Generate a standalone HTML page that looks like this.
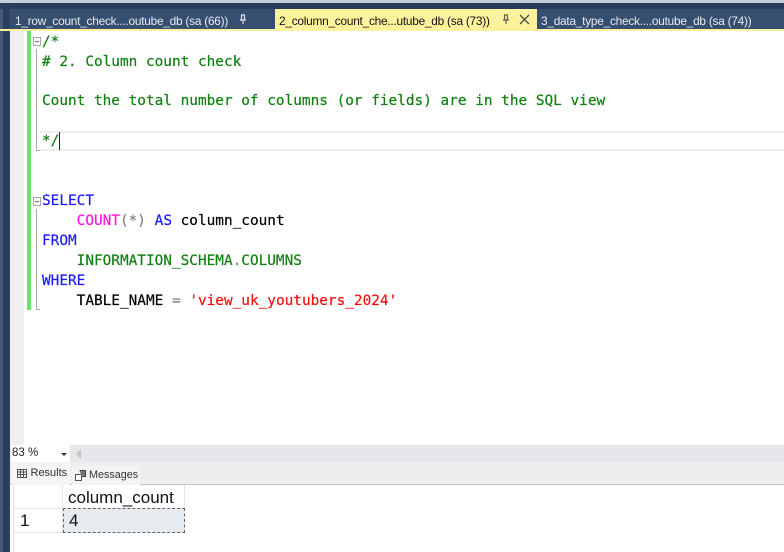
<!DOCTYPE html>
<html>
<head>
<meta charset="utf-8">
<style>
html,body{margin:0;padding:0}
body{width:784px;height:552px;position:relative;overflow:hidden;background:#fff;font-family:"Liberation Sans",sans-serif}
div{position:absolute;box-sizing:border-box}
.tab{font-size:11.85px;line-height:16px;white-space:pre;top:13px;letter-spacing:-.02em}
.l{position:absolute;left:42px;font:14.4px/20px "DejaVu Sans Mono",monospace;white-space:pre;color:#000;-webkit-text-stroke:.2px}
.g{color:#118011}.b{color:#1a1aff}.m{color:#ff14e0}.h{color:#808080}.r{color:#f01010}.t{color:#118011}
</style>
</head>
<body>
<!-- window chrome -->
<div style="left:0;top:0;width:784px;height:3px;background:#c6cede"></div>
<div style="left:0;top:3px;width:784px;height:6px;background:#2a3a5a"></div>
<div style="left:0;top:9px;width:784px;height:22px;background:#364e70"></div>
<div style="left:0;top:3px;width:10px;height:549px;background:#2b3c5c"></div>
<div style="left:0;top:9px;width:3px;height:543px;background:#44597c"></div>
<div style="left:9px;top:9px;width:1px;height:543px;background:#324665"></div>
<!-- tabs -->
<div style="left:275px;top:9px;width:262px;height:22px;background:#fff29d"></div>
<div style="left:0;top:29px;width:784px;height:2px;background:#fff29d"></div>
<div class="tab" style="left:15px;color:#e8ecf2">1_row_count_check....outube_db (sa (66))</div>
<div class="tab" style="left:279px;color:#111">2_column_count_che...utube_db (sa (73))</div>
<div class="tab" style="left:541px;color:#e8ecf2">3_data_type_check....outube_db (sa (74))</div>
<svg style="position:absolute;left:238px;top:14px" width="10" height="11" viewBox="0 0 10 11"><path d="M3 1h4M3.5 1v4.5M6.5 1v4.5M2 6h6M5 6v4" stroke="#dfe5ee" stroke-width="1.2" fill="none"/></svg>
<svg style="position:absolute;left:501px;top:14px" width="10" height="11" viewBox="0 0 10 11"><path d="M3 1h4M3.5 1v4.5M6.5 1v4.5M2 6h6M5 6v4" stroke="#5a5a4a" stroke-width="1.2" fill="none"/></svg>
<svg style="position:absolute;left:519px;top:14px" width="11" height="11" viewBox="0 0 11 11"><path d="M1 1l9 9M10 1l-9 9" stroke="#4a4a40" stroke-width="1.3" fill="none"/></svg>
<!-- editor -->
<div style="left:10px;top:31px;width:774px;height:414px;background:#fff"></div>
<div style="left:10px;top:31px;width:14px;height:414px;background:#efeff2"></div>
<div style="left:27px;top:31px;width:4px;height:279px;background:#6fe06f"></div>
<div style="left:40px;top:131px;width:744px;height:20px;background:#fff;border-top:2px solid #eeeeee;border-bottom:2px solid #eeeeee"></div>
<!-- outlining -->
<div style="left:36px;top:49px;width:1px;height:101px;background:#a8a8a8"></div>
<div style="left:36px;top:150px;width:4px;height:1px;background:#a8a8a8"></div>
<div style="left:36px;top:209px;width:1px;height:101px;background:#a8a8a8"></div>
<div style="left:36px;top:309px;width:4px;height:1px;background:#a8a8a8"></div>
<div style="left:33px;top:37px;width:8px;height:9px;border:1px solid #a8a8a8;background:#fff"></div>
<div style="left:35px;top:41px;width:4px;height:1px;background:#666"></div>
<div style="left:33px;top:197px;width:8px;height:9px;border:1px solid #a8a8a8;background:#fff"></div>
<div style="left:35px;top:201px;width:4px;height:1px;background:#666"></div>
<!-- code -->
<span class="l t" style="top:32px">/*</span>
<span class="l t" style="top:52px"># 2. Column count check</span>
<span class="l t" style="top:91px">Count the total number of columns (or fields) are in the SQL view</span>
<span class="l t" style="top:131px">*/</span>
<div style="left:59px;top:132px;width:1px;height:18px;background:#222"></div>
<span class="l b" style="top:191px">SELECT</span>
<span class="l" style="top:211px">    <span class="m">COUNT</span><span class="h">(*)</span> <span class="b">AS</span> column_count</span>
<span class="l b" style="top:231px">FROM</span>
<span class="l g" style="top:251px">    INFORMATION_SCHEMA<span class="h">.</span>COLUMNS</span>
<span class="l b" style="top:271px">WHERE</span>
<span class="l" style="top:291px">    TABLE_NAME <span class="h">=</span> <span class="r">'view_uk_youtubers_2024'</span></span>
<!-- zoom bar -->
<div style="left:10px;top:445px;width:774px;height:17px;background:#e6e6eb"></div>
<div style="left:11px;top:445px;width:59px;height:17px;background:#fff"></div>
<div style="left:12px;top:446px;font-size:11.5px;line-height:15px;color:#222">83 %</div>
<div style="left:61px;top:453px;width:0;height:0;border-left:3px solid transparent;border-right:3px solid transparent;border-top:3px solid #333"></div>
<div style="left:76px;top:449px;width:0;height:0;border-top:5px solid transparent;border-bottom:5px solid transparent;border-right:5px solid #c4c4c8"></div>
<!-- results tabs -->
<div style="left:10px;top:462px;width:774px;height:22px;background:#eeeeee"></div>
<div style="left:10px;top:484px;width:774px;height:1px;background:#c4c4c4"></div>
<div style="left:12px;top:462px;width:58px;height:23px;background:#f5f5f5"></div>
<div style="left:72px;top:466px;width:68px;height:19px;background:#f3f3f3"></div>
<svg style="position:absolute;left:17px;top:469px" width="10" height="9" viewBox="0 0 10 9"><path d="M.5.5h9v8h-9zM.5 3h9M.5 5.5h9M3.5.5v8M6.5.5v8" stroke="#555" fill="none"/></svg>
<div style="left:30.5px;top:466px;font-size:11px;line-height:14px;color:#333">Results</div>
<svg style="position:absolute;left:75px;top:470px" width="11" height="11" viewBox="0 0 11 11"><path d="M.5 4.5h6v6h-6z" fill="#fff" stroke="#555"/><path d="M4.5.5h6v6h-4" fill="#777" stroke="#444"/></svg>
<div style="left:89px;top:468px;font-size:10.8px;line-height:14px;color:#333">Messages</div>
<!-- grid -->
<div style="left:13px;top:485px;width:1px;height:67px;background:#e2e2e2"></div>
<div style="left:62px;top:485px;width:1px;height:48px;background:#e6e6e6"></div>
<div style="left:184px;top:485px;width:1px;height:48px;background:#e6e6e6"></div>
<div style="left:13px;top:508px;width:172px;height:1px;background:#e6e6e6"></div>
<div style="left:13px;top:532px;width:172px;height:1px;background:#e6e6e6"></div>
<div style="left:68px;top:488px;font-size:17px;line-height:19px;color:#111">column_count</div>
<div style="left:20px;top:511px;font-size:17px;line-height:19px;color:#111">1</div>
<div style="left:63px;top:508px;width:122px;height:25px;background:#e6ebf0;border:1px dashed #666"></div>
<div style="left:69px;top:511px;font-size:17px;line-height:19px;color:#111">4</div>
</body>
</html>
